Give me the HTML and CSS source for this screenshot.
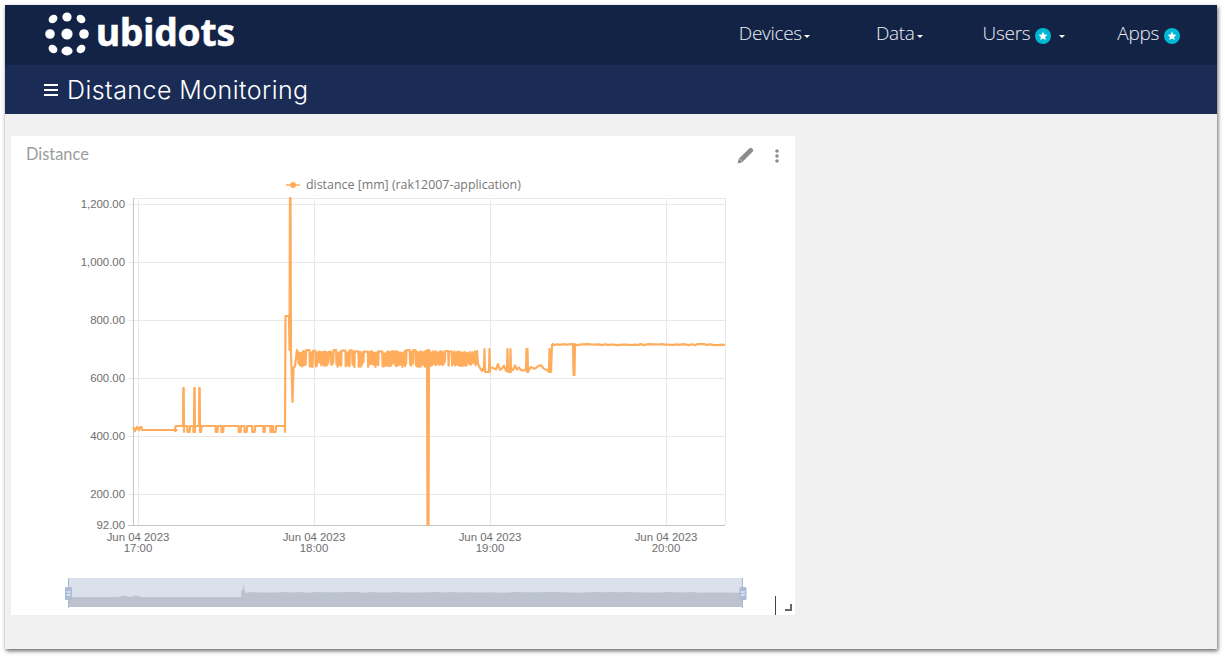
FILE: index.html
```html
<!DOCTYPE html>
<html lang="en">
<head>
<meta charset="UTF-8" />
<meta name="viewport" content="width=device-width, initial-scale=1" />
<title>Distance Monitoring</title>
<link rel="stylesheet" href="styles.css">
</head>
<body>
<div class="frame">
  <header class="topbar">
    <a class="brand">
      <svg class="brand-dots" width="44" height="44" viewBox="0 0 44 44" fill="#fff">
        <ellipse cx="8" cy="7" rx="4.8" ry="3.8" transform="rotate(-40 8 7)"/>
        <circle cx="22" cy="5" r="4.6"/>
        <ellipse cx="36" cy="7" rx="4.8" ry="3.8" transform="rotate(40 36 7)"/>
        <circle cx="5" cy="22" r="4.8"/>
        <circle cx="22" cy="22" r="5.6"/>
        <circle cx="39" cy="22" r="4.8"/>
        <ellipse cx="8" cy="37" rx="4.8" ry="3.8" transform="rotate(40 8 37)"/>
        <ellipse cx="22" cy="39" rx="5.6" ry="4.4"/>
        <ellipse cx="36" cy="37" rx="4.8" ry="3.8" transform="rotate(-40 36 37)"/>
      </svg>
      <span class="brand-name">ubidots</span>
    </a>
    <nav class="nav">
      <a class="nav-item nav-devices">Devices<i class="caret"></i></a>
      <a class="nav-item nav-data">Data<i class="caret"></i></a>
      <a class="nav-item nav-users">Users
        <svg class="star" width="16" height="16" viewBox="0 0 16 16"><circle cx="8" cy="8" r="8" fill="#00b8d4"/><path d="M8 3.6l1.3 2.9 3.1.3-2.3 2.1.7 3.1L8 10.5l-2.8 1.5.7-3.1-2.3-2.1 3.1-.3z" fill="#fff"/></svg>
        <i class="caret caret-far"></i></a>
      <a class="nav-item">Apps
        <svg class="star" width="16" height="16" viewBox="0 0 16 16"><circle cx="8" cy="8" r="8" fill="#00b8d4"/><path d="M8 3.6l1.3 2.9 3.1.3-2.3 2.1.7 3.1L8 10.5l-2.8 1.5.7-3.1-2.3-2.1 3.1-.3z" fill="#fff"/></svg>
      </a>
    </nav>
  </header>
  <div class="subbar">
    <span class="burger"><i></i><i></i><i></i></span>
    <h1>Distance Monitoring</h1>
  </div>
  <main class="content">
    <section class="card">
      <div class="card-head">
        <h2>Distance</h2>
        <svg class="pencil" width="17" height="17" viewBox="0 0 17 17" fill="#8c8c8c"><path d="M12.4 1.2c.7-.7 1.7-.7 2.4 0l1 1c.7.7.7 1.7 0 2.4L5.2 15.200 .5 16.500l1.300-4.700z"/><path d="M2.600 11.800l2.600 2.600" stroke="#d8d8d8" stroke-width=".8"/></svg>
        <svg class="dots" width="4" height="14" viewBox="0 0 4 14" fill="#8c8c8c"><circle cx="2" cy="2" r="1.800"/><circle cx="2" cy="7" r="1.800"/><circle cx="2" cy="12" r="1.800"/></svg>
      </div>
      <svg id="chart" class="chart" width="784" height="479" viewBox="11 136 784 479"></svg>
    </section>
  </main>
</div>
<script src="chart.js"></script>
</body>
</html>
```

FILE: styles.css
```css
html, body {
  margin: 0;
  height: 100%;
  background: #fff;
  overflow: hidden;
}
.frame {
  width: 1212px;
  height: 644px;
  margin: 5px 0 0 5px;
  background: #f1f1f1;
  box-shadow: 1px 2px 4px rgba(0,0,0,0.6);
  display: flex;
  flex-direction: column;
  font-family: 'Open Sans', sans-serif;
}
.topbar {
  height: 60px;
  background: #132346;
  display: flex;
  align-items: center;
  justify-content: space-between;
  color: #fff;
}
.brand {
  display: flex;
  align-items: center;
  gap: 7px;
  margin-left: 40px;
  margin-top: -2px;
}
.brand-name {
  font-family: 'Noto Sans', sans-serif;
  font-size: 37px;
  font-weight: 700;
  letter-spacing: -0.1px;
  line-height: 44px;
  margin-top: -5px;
  -webkit-text-stroke: 0.6px #fff;
}
.nav {
  display: flex;
  align-items: center;
  margin-right: 37px;
}
.nav-item {
  font-weight: 300;
  font-size: 19px;
  letter-spacing: -0.3px;
  color: #eef0f4;
  display: flex;
  align-items: center;
  margin-top: -5px;
}
.nav-devices { margin-right: 66px; }
.nav-data { margin-right: 60px; }
.nav-users { margin-right: 52px; }
.star {
  margin-left: 5px;
  margin-top: 6px;
}
.caret {
  width: 0;
  height: 0;
  margin-left: 2px;
  margin-top: 7px;
  border-top: 3px solid #fff;
  border-left: 3px solid transparent;
  border-right: 3px solid transparent;
}
.caret-far { margin-left: 8px; }
.subbar {
  height: 49px;
  background: #1a2c55;
  display: flex;
  align-items: center;
  padding-left: 39px;
  color: #fff;
}
.burger {
  display: flex;
  flex-direction: column;
  gap: 3px;
  margin-right: 9px;
}
.burger i {
  display: block;
  width: 14px;
  height: 2px;
  background: #fff;
}
.subbar h1 {
  margin: 0;
  font-family: Inter, sans-serif;
  font-size: 25px;
  font-weight: 300;
  letter-spacing: 0.45px;
}
.content {
  padding: 22px 6px;
}
.card {
  position: relative;
  width: 784px;
  height: 479px;
  background: #fff;
}
.card-head {
  position: relative;
  z-index: 1;
  display: flex;
  align-items: center;
  height: 36px;
  padding: 0 16px 0 15px;
}
.card-head h2 {
  margin: -2px 0 0;
  flex: 1;
  font-family: Lato, sans-serif;
  font-size: 16.4px;
  font-weight: 400;
  color: #9c9c9c;
}
.pencil {
  margin-right: 21px;
  margin-top: 3px;
}
.dots { margin-top: 4px; }
.chart {
  position: absolute;
  left: 0;
  top: 0;
}
.axis-label {
  font-family: 'Liberation Sans', sans-serif;
  font-size: 11.4px;
  fill: #6e6e6e;
}
.legend-label {
  font-family: 'Open Sans', sans-serif;
  font-size: 12.4px;
  fill: #777;
}
```

FILE: chart.js
```js
(() => {
  const chart = document.getElementById('chart');
  const NS = 'http://www.w3.org/2000/svg';
  const ORANGE = '#ffad5c';

  // fixed seed so the noise stays the same between loads
  let seed = 41;
  function rnd() {
    seed = (seed * 16807) % 2147483647;
    return seed / 2147483647;
  }

  function add(tag, attrs, text) {
    const el = document.createElementNS(NS, tag);
    for (const k in attrs) el.setAttribute(k, attrs[k]);
    if (text) el.textContent = text;
    chart.appendChild(el);
    return el;
  }

  // grid
  [204, 262, 320, 378, 436, 494].forEach(y => {
    add('line', { x1: 128, x2: 725, y1: y + 0.5, y2: y + 0.5, stroke: '#e8e8e8' });
  });
  add('line', { x1: 133, x2: 725, y1: 198.5, y2: 198.5, stroke: '#e8e8e8' });
  [138, 314, 490, 666, 725].forEach(x => {
    add('line', { x1: x + 0.5, x2: x + 0.5, y1: 198, y2: 525, stroke: '#e8e8e8' });
  });

  // axes
  add('line', { x1: 133.5, x2: 133.5, y1: 198, y2: 525, stroke: '#c4c4c4' });
  add('line', { x1: 128, x2: 725, y1: 525.5, y2: 525.5, stroke: '#c4c4c4' });
  [[204, '1,200.00'], [262, '1,000.00'], [320, '800.00'], [378, '600.00'], [436, '400.00'], [494, '200.00'], [525, '92.00']].forEach(([y, t]) => {
    add('text', { x: 125, y: y + 3.5, 'text-anchor': 'end', class: 'axis-label' }, t);
  });
  [[138, '17:00'], [314, '18:00'], [490, '19:00'], [666, '20:00']].forEach(([x, t]) => {
    add('text', { x, y: 541, 'text-anchor': 'middle', class: 'axis-label' }, 'Jun 04 2023');
    add('text', { x, y: 552, 'text-anchor': 'middle', class: 'axis-label' }, t);
  });

  // legend
  add('line', { x1: 286, x2: 300, y1: 185, y2: 185, stroke: ORANGE, 'stroke-width': 1.5 });
  add('circle', { cx: 293, cy: 185, r: 3, fill: ORANGE });
  add('text', { x: 306, y: 189, class: 'legend-label' }, 'distance [mm] (rak12007-application)');

  // series, built left to right as screen points
  const pts = [];
  function p(x, y) { pts.push([x, y]); }

  function flat(x0, x1, y, dipY, chance) {
    let x = x0;
    while (x < x1) {
      if (rnd() < chance) {
        const w = 0.6 + rnd() * 2.5;
        p(x, dipY);
        p(x + w, dipY);
        x += w + 0.4;
      }
      p(x, y);
      x += 1.5 + rnd() * 2;
      p(x, y);
    }
  }

  // mostly a filled band, with a short hold on top now and then that leaves a gap
  function noisy(x0, x1, top, bottom) {
    let x = x0;
    while (x < x1) {
      const r = rnd();
      if (r < 0.08) {
        const y = top + rnd() * 2;
        p(x, y);
        x += 2 + rnd() * 2;
        p(x, y);
        p(x + 0.4, bottom - rnd() * 3);
      } else {
        p(x, top + 1 + rnd() * 3);
        p(x + 0.5, bottom - rnd() * 5);
      }
      x += 0.9;
    }
  }

  p(133, 427); p(135, 431); p(137, 427); p(139, 430);
  flat(140, 175, 430, 427, 0.12);
  p(175, 431); p(175.5, 426);
  [[176, 183], [184, 194], [195, 199], [200, 285]].forEach(([a, b], i) => {
    flat(a, b, 426, 432, i === 3 ? 0.3 : 0.15);
    if (i < 3) {
      p(b, 426); p(b + 0.3, 388); p(b + 0.7, 388); p(b + 1, 432);
    }
  });
  p(285, 432); p(285.5, 316); p(289, 316); p(289.5, 350);
  p(290, 198); p(290.5, 198); p(291, 352); p(292.5, 402); p(293.5, 368); p(295, 366); p(297, 350);
  noisy(298, 427, 350, 367);
  p(427, 350); p(427.5, 525); p(428.5, 525); p(429, 350);
  noisy(430, 476, 350, 366);
  p(477, 351); p(478, 364); p(480, 368); p(482, 371);
  [[484, 489], [507, 510], [526, 527]].forEach(([a, b], i) => {
    const from = i === 0 ? 483 : i === 1 ? 490 : 511;
    for (let x = from; x < a; x += 2) p(x, 364 + rnd() * 7);
    p(a, 370); p(a + 0.5, 349); p(a + 1, 372); p(b, 372); p(b + 0.5, 349); p(b + 1, 372);
  });
  for (let x = 529; x < 549; x += 2) p(x, 365 + rnd() * 7);
  p(549, 372); p(549.5, 349); p(550, 372); p(551, 372); p(552, 345); p(553, 344);
  for (let x = 554; x < 725; x += 3) {
    if (x > 571 && x < 575) {
      p(573, 344); p(573.5, 375); p(574.5, 375); p(575, 344);
    } else {
      p(x, 344 + rnd() * 1.2);
    }
  }
  p(725, 345);

  const d = 'M' + pts.map(q => q[0].toFixed(1) + ' ' + q[1].toFixed(1)).join('L');
  add('path', { d, fill: 'none', stroke: ORANGE, 'stroke-width': 2.2, 'stroke-linejoin': 'round' });

  // navigator
  add('rect', { x: 68, y: 578, width: 675, height: 29, fill: '#dbe1ea' });
  const nav = ['M68 607L68 597'];
  for (let x = 70; x < 242; x += 6) {
    const spike = Math.abs(x - 124) < 3 || Math.abs(x - 136) < 3 ? 595.5 : 597;
    nav.push('L' + x + ' ' + spike);
  }
  nav.push('L241 597L241.5 590L243 590L243.5 583L244.5 590L246 593L248 592.5');
  for (let x = 252; x < 743; x += 8) nav.push('L' + x + ' ' + (592 + rnd() * 0.8).toFixed(1));
  nav.push('L743 592L743 607Z');
  add('path', { d: nav.join(''), fill: '#bcc3ce' });
  add('line', { x1: 68.5, x2: 68.5, y1: 578, y2: 608, stroke: '#a6b8d2' });
  add('line', { x1: 742.5, x2: 742.5, y1: 578, y2: 608, stroke: '#a6b8d2' });
  [65, 739.5].forEach(x => {
    add('rect', { x, y: 587, width: 7, height: 13, rx: 1, fill: '#acbcd6' });
    add('line', { x1: x + 1.5, x2: x + 5.5, y1: 592, y2: 592, stroke: '#fff' });
    add('line', { x1: x + 1.5, x2: x + 5.5, y1: 595, y2: 595, stroke: '#fff' });
  });

  // text cursor and resize mark
  add('line', { x1: 775.5, x2: 775.5, y1: 596, y2: 615, stroke: '#444' });
  add('path', { d: 'M792 604v7h-7v-2h5v-5z', fill: '#666' });
})();
```
